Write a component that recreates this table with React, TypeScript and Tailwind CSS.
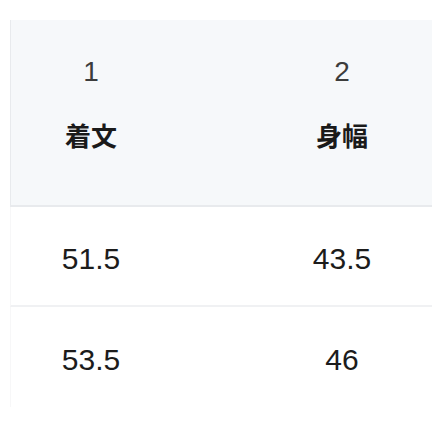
const ROWS = [
  ["51.5", "43.5"],
  ["53.5", "46"],
];

const HEAD = [
  ["1", "着文"],
  ["2", "身幅"],
];

export default function App() {
  return (
    <div
      className="h-[432px] w-[432px] overflow-hidden bg-white pt-[20px]"
      style={{ fontFamily: '"Liberation Sans", "Noto Sans CJK JP", sans-serif' }}
    >
      <div className="w-[512px] pl-[10px]">
        <div className="grid h-[187px] grid-cols-[160px_342px] border-b-[2px] border-l border-[#e8eaed] bg-[#f6f8fa]">
          {HEAD.map(([num, label]) => (
            <div key={num} className="flex flex-col items-center pt-[33px]">
              <span className="text-[28px] leading-[38px] text-[#3c3c3c]">{num}</span>
              <span
                className="mt-[28px] text-[26px] font-bold leading-[32px] text-[#1a1a1a]"
                style={{ fontFamily: '"Noto Sans CJK JP", sans-serif' }}
              >
                {label}
              </span>
            </div>
          ))}
        </div>
        {ROWS.map((row, i) => (
          <div
            key={i}
            className={`grid h-[100px] grid-cols-[160px_342px] items-center border-l border-[#f7f7f8] pt-[5px] ${
              i === 0 ? "border-b-[2px] border-b-[#f0f1f3]" : ""
            }`}
          >
            {row.map((cell, j) => (
              <span key={j} className="text-center text-[30px] leading-[40px] text-[#1c1c1c]">
                {cell}
              </span>
            ))}
          </div>
        ))}
      </div>
    </div>
  );
}
